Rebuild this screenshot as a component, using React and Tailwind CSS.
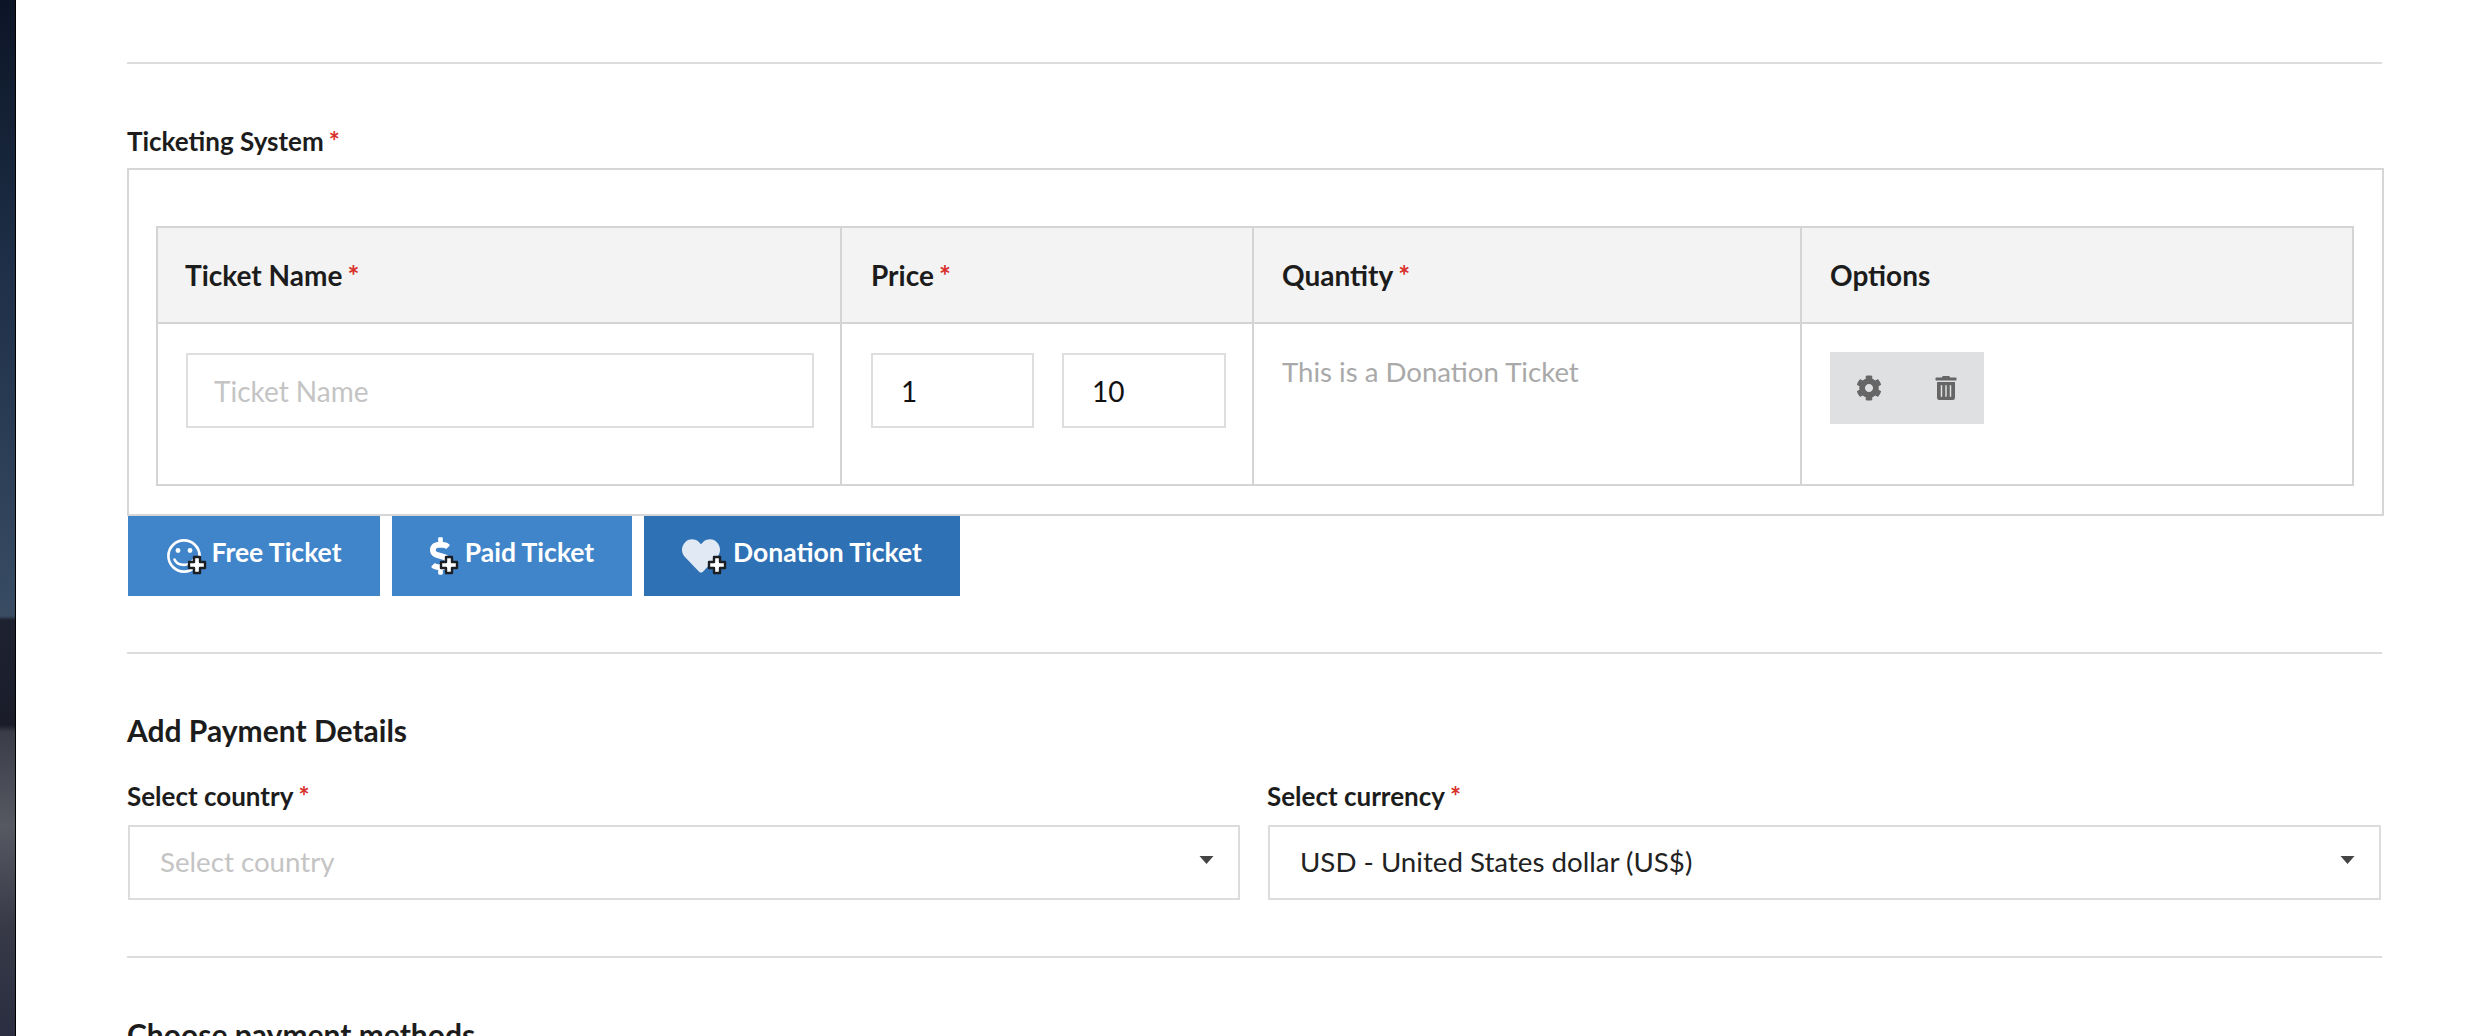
import { FaDollarSign, FaHeart, FaCog, FaTrashAlt } from 'react-icons/fa';

const Req = () => <span className="text-[#d9302c] font-bold ml-[5px]">*</span>;

// thin ring smiley, the package one has too heavy a ring
const Smile = () => (
    <svg viewBox="0 0 34 34" className="w-[34px] h-[34px]" fill="none" stroke="currentColor">
        <circle cx="17" cy="17" r="15.6" strokeWidth="2.6" />
        <circle cx="11" cy="11.5" r="2.4" fill="currentColor" stroke="none" />
        <circle cx="23" cy="11.5" r="2.4" fill="currentColor" stroke="none" />
        <path d="M7.5 20.5C10 26.5 20 28.500 26.500 21" strokeWidth="2.6" strokeLinecap="round" />
    </svg>
);

// small black outlined cross that sits on the corner of each ticket icon
const PlusBadge = ({ className }) => (
    <svg viewBox="0 0 20 20" className={`absolute w-[20px] h-[20px] ${className}`}>
        <path d="M7 2h6v5h5v6h-5v5H7v-5H2V7h5z" fill="#fff" stroke="#1b1f24" strokeWidth="2.4" strokeLinejoin="round" />
    </svg>
);

const TicketButton = ({ icon, label, width, bg, badge, gap }) => (
    <button className={`flex items-center justify-center h-[80px] text-white font-bold text-[26.5px] leading-none ${width} ${bg} ${gap}`}>
        <span className="relative flex items-center">
            {icon}
            <PlusBadge className={badge} />
        </span>
        <span className="-mt-[8px]">{label}</span>
    </button>
);

const Select = ({ value, placeholder }) => (
    <div className="relative h-[75px] border-2 border-[#dcdcdc] pl-[30px] flex items-center">
        <span className={`-mt-[2px] text-[27.7px] ${placeholder ? 'text-[#c4c4c4]' : 'text-[#222]'}`}>{value}</span>
        <svg viewBox="0 0 14 8" className="absolute right-[24px] top-[29px] w-[15px] h-[8px]">
            <path d="M0 0h14L7 8z" fill="#444" />
        </svg>
    </div>
);

const App = () => {
    return (
        <div className="flex h-[1036px] w-full overflow-hidden bg-white text-[#1c1c1c] font-['Lato','Liberation_Sans',sans-serif]">
            <div className="w-[16px] shrink-0 border-r border-black bg-[linear-gradient(180deg,#0c1526_0px,#1e2f47_264px,#364a62_595px,#3a4c62_616px,#1e2230_620px,#1a1c2a_725px,#3a3c48_732px,#565862_826px,#383a48_925px,#2a2e40_1036px)]" />
            <div className="w-[2368px] ml-[111px] shrink-0">
                <div className="mt-[62px] h-[2px] w-[2255px] bg-[#dcdcdc]" />

                <div className="mt-[62px] mb-[12px] h-[30px] leading-[30px] text-[26px] font-bold">
                    Ticketing System<Req />
                </div>
                <div className="border-2 border-[#d6d6d6] w-[2257px] pt-[56px] pb-[28px] pl-[27px]">
                    <table className="table-fixed border-collapse w-[2196px]">
                        <colgroup>
                            <col className="w-[684px]" />
                            <col className="w-[412px]" />
                            <col className="w-[548px]" />
                            <col className="w-[552px]" />
                        </colgroup>
                        <thead>
                            <tr className="h-[96px] bg-[#f3f3f3] text-[28px] font-bold">
                                <th className="border-2 border-[#d4d4d4] text-left font-bold pl-[27px]">Ticket Name<Req /></th>
                                <th className="border-2 border-[#d4d4d4] text-left font-bold pl-[29px]">Price<Req /></th>
                                <th className="border-2 border-[#d4d4d4] text-left font-bold pl-[28px]">Quantity<Req /></th>
                                <th className="border-2 border-[#d4d4d4] text-left font-bold pl-[28px]">Options</th>
                            </tr>
                        </thead>
                        <tbody>
                            <tr className="h-[162px]">
                                <td className="border-2 border-[#d4d4d4] align-top pt-[29px] pl-[28px]">
                                    <input
                                        placeholder="Ticket Name"
                                        className="w-[628px] h-[75px] border-2 border-[#dedede] pl-[26px] text-[28px] outline-none placeholder:text-[#c4c4c4]"
                                    />
                                </td>
                                <td className="border-2 border-[#d4d4d4] align-top pt-[29px] pl-[29px]">
                                    <div className="flex gap-[28px]">
                                        <input defaultValue="1" className="w-[163px] h-[75px] border-2 border-[#dedede] pl-[28px] text-[28px] text-[#111] outline-none" />
                                        <input defaultValue="10" className="w-[164px] h-[75px] border-2 border-[#dedede] pl-[28px] text-[28px] text-[#111] outline-none" />
                                    </div>
                                </td>
                                <td className="border-2 border-[#d4d4d4] align-top pt-[31px] pl-[28px] text-[27.6px] leading-[34px] text-[#a9a9a9]">
                                    This is a Donation Ticket
                                </td>
                                <td className="border-2 border-[#d4d4d4] align-top pt-[28px] pl-[28px]">
                                    <div className="flex items-center w-[154px] h-[72px] bg-[#dfe0e2] text-[#666]">
                                        <FaCog className="ml-[26px] text-[26px]" />
                                        <FaTrashAlt className="ml-[52px] text-[24px]" />
                                    </div>
                                </td>
                            </tr>
                        </tbody>
                    </table>
                </div>

                <div className="flex gap-[12px] pl-[1px]">
                    <TicketButton
                        label="Free Ticket"
                        width="w-[252px]"
                        bg="bg-[#4085ca]"
                        gap="gap-[11px]"
                        badge="-right-[6px] -bottom-[2px]"
                        icon={<Smile />}
                    />
                    <TicketButton
                        label="Paid Ticket"
                        width="w-[240px]"
                        bg="bg-[#4085ca]"
                        gap="gap-[14px]"
                        badge="-right-[8px] bottom-0"
                        icon={<FaDollarSign className="text-[38px] w-[21px]" />}
                    />
                    <TicketButton
                        label="Donation Ticket"
                        width="w-[316px]"
                        bg="bg-[#2f71b5]"
                        gap="gap-[13px]"
                        badge="-right-[7px] bottom-0"
                        icon={<FaHeart className="text-[38px] opacity-85" />}
                    />
                </div>

                <div className="mt-[56px] h-[2px] w-[2255px] bg-[#dcdcdc]" />

                <div className="mt-[58px] h-[36px] leading-[36px] text-[30px] font-bold">Add Payment Details</div>

                <div className="mt-[33px] grid grid-cols-[1112px_1113px] gap-x-[28px] w-[2253px] pl-[1px]">
                    <div>
                        <div className="-ml-[1px] h-[30px] leading-[30px] text-[26px] font-bold mb-[14px]">Select country<Req /></div>
                        <Select value="Select country" placeholder />
                    </div>
                    <div>
                        <div className="-ml-[1px] h-[30px] leading-[30px] text-[26px] font-bold mb-[14px]">Select currency<Req /></div>
                        <Select value="USD - United States dollar (US$)" />
                    </div>
                </div>

                <div className="mt-[56px] h-[2px] w-[2255px] bg-[#dcdcdc]" />

                <div className="mt-[58px] h-[36px] leading-[36px] text-[30px] font-bold">Choose payment methods</div>
            </div>
        </div>
    );
};

export default App;
